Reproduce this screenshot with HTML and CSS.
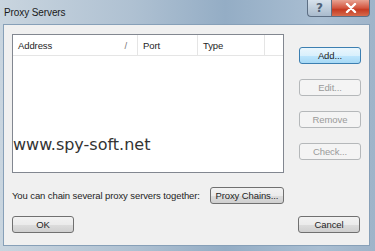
FILE: index.html
```html
<!DOCTYPE html>
<html lang="en">
<head>
    <meta charset="UTF-8">
    <title>Proxy Servers</title>
    <link rel="stylesheet" href="styles.css">
</head>
<body>
    <div class="window">
        <div class="titlebar">
            <span class="title">Proxy Servers</span>
            <div class="caption-btns">
                <div class="cap-btn help">?</div>
                <div class="cap-btn close">
                    <svg width="12" height="10" viewBox="0 0 12 10">
                        <path d="M2 1 L10 9 M10 1 L2 9" stroke="#fff" stroke-width="2.4" stroke-linecap="round"/>
                    </svg>
                </div>
            </div>
        </div>

        <div class="client">
            <div class="top-row">
                <div class="listbox">
                    <div class="list-header">
                        <div class="col col-address">Address <span class="sort">/</span></div>
                        <div class="col col-port">Port</div>
                        <div class="col col-type">Type</div>
                        <div class="col col-rest"></div>
                    </div>
                    <div class="list-body">
                        <div class="watermark">www.spy-soft.net</div>
                    </div>
                </div>
                <div class="side-btns">
                    <button class="btn default">Add...</button>
                    <button class="btn" disabled>Edit...</button>
                    <button class="btn" disabled>Remove</button>
                    <button class="btn" disabled>Check...</button>
                </div>
            </div>

            <div class="chain-row">
                <span>You can chain several proxy servers together:</span>
                <button class="btn chain">Proxy Chains...</button>
            </div>

            <div class="bottom-row">
                <button class="btn">OK</button>
                <button class="btn">Cancel</button>
            </div>
        </div>
    </div>
</body>
</html>
```

FILE: styles.css
```css
* {
    margin: 0;
    padding: 0;
    box-sizing: border-box;
}

body {
    font-family: 'Liberation Sans', Arial, sans-serif;
    font-size: 9.5px;
    letter-spacing: -0.1px;
    color: #1e1e1e;
    background: #b9c9d8;
}

.window {
    width: 375px;
    height: 251px;
    display: flex;
    flex-direction: column;
    background: linear-gradient(90deg, #c9d5df 0%, #afc1d2 35%, #94adc5 60%, #a9bed2 85%, #9fb4c9 100%);
}

.titlebar {
    height: 24px;
    display: flex;
    align-items: flex-start;
    padding-left: 4px;
    padding-right: 5px;
}

.title {
    margin-top: 7px;
    font-size: 10px;
    color: #1a1a1a;
}

.caption-btns {
    margin-left: auto;
    display: flex;
}

.cap-btn {
    height: 17px;
    display: flex;
    align-items: center;
    justify-content: center;
    border: 1px solid #5d6f84;
    border-top: none;
}

.help {
    width: 24px;
    border-radius: 0 0 0 4px;
    border-right: none;
    background: linear-gradient(#d7e2ec, #a9bbcd);
    color: #4f6277;
    font-family: 'DejaVu Sans', sans-serif;
    font-weight: bold;
    font-size: 12px;
}

.close {
    width: 39px;
    border-radius: 0 0 4px 0;
    background: linear-gradient(#e8a393 0%, #d3553f 50%, #c53b22 60%, #d66b4c 100%);
}

.client {
    flex: 1;
    margin: 0 5px 5px 3px;
    background: #f0f0f0;
    border: 1px solid #87a0b8;
    padding: 9px 8px 0 8px;
    display: flex;
    flex-direction: column;
}

.top-row {
    display: flex;
    justify-content: space-between;
}

.listbox {
    width: 272px;
    height: 139px;
    border: 1px solid #828790;
    background: #fff;
    display: flex;
    flex-direction: column;
}

.list-header {
    height: 21px;
    display: flex;
    border-bottom: 1px solid #e5e5e5;
}

.col {
    display: flex;
    align-items: center;
    padding-left: 5px;
    border-right: 1px solid #e5e5e5;
}

.col-address {
    width: 125px;
}

.sort {
    margin-left: auto;
    margin-right: 10px;
    color: #777;
}

.col-port {
    width: 60px;
}

.col-type {
    width: 67px;
}

.col-rest {
    flex: 1;
    border-right: none;
}

.list-body {
    flex: 1;
    padding-top: 79px;
}

.watermark {
    font-family: 'DejaVu Sans', sans-serif;
    font-size: 16px;
    line-height: 19px;
    letter-spacing: 0;
    color: #333;
}

.side-btns {
    display: flex;
    flex-direction: column;
    gap: 15px;
    margin-top: 13px;
}

.btn {
    width: 62px;
    height: 17px;
    font-family: inherit;
    font-size: 9.5px;
    letter-spacing: -0.1px;
    color: #1e1e1e;
    border: 1px solid #707070;
    border-radius: 3px;
    background: linear-gradient(#f2f2f2 0%, #ebebeb 50%, #dddddd 51%, #cfcfcf 100%);
}

.btn.default {
    border-color: #3c7fb1;
    background: linear-gradient(#eaf6fd 0%, #d9f0fc 50%, #bee6fd 51%, #a7d9f5 100%);
}

.btn:disabled {
    color: #9a9a9a;
    border-color: #b5b8ba;
    background: #f4f4f4;
}

.chain-row {
    margin-top: 14px;
    display: flex;
    align-items: center;
    white-space: nowrap;
    gap: 10px;
}

.btn.chain {
    width: 74px;
}

.bottom-row {
    margin-top: 12px;
    display: flex;
    justify-content: space-between;
    padding-right: 1px;
}
```
